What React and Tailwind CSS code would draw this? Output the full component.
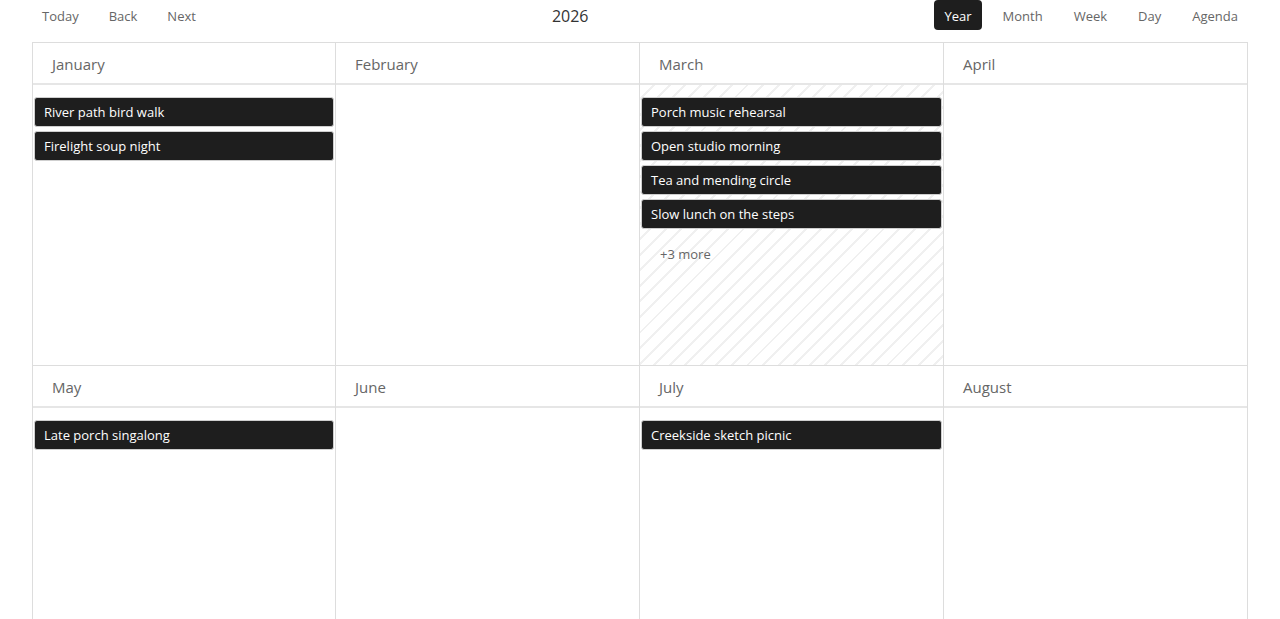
import React from 'react';

const months = [
  { name: 'January', events: ['River path bird walk', 'Firelight soup night'] },
  { name: 'February', events: [] },
  { name: 'March', events: ['Porch music rehearsal', 'Open studio morning', 'Tea and mending circle', 'Slow lunch on the steps'], more: 3, today: true },
  { name: 'April', events: [] },
  { name: 'May', events: ['Late porch singalong'] },
  { name: 'June', events: [] },
  { name: 'July', events: ['Creekside sketch picnic'] },
  { name: 'August', events: [] },
  { name: 'September', events: [] },
  { name: 'October', events: [] },
  { name: 'November', events: [] },
  { name: 'December', events: [] },
];

const views = ['Year', 'Month', 'Week', 'Day', 'Agenda'];

function MonthCell({ month }) {
  return (
    <div className="flex flex-col h-[323px] border-t border-r border-[#dddddd]">
      {/* Month header */}
      <div className="h-[42px] shrink-0 flex items-center px-[19px] pt-[2px] text-[15px] text-[#666666] border-b-2 border-[#e6e6e6]">
        {month.name}
      </div>
      <div
        className={`flex-1 flex flex-col gap-[4px] pt-[12px] ${month.today ? 'bg-[repeating-linear-gradient(135deg,transparent_0px,transparent_9px,#f0f0f0_9px,#f0f0f0_11px)]' : ''}`}
      >
        {month.events.map((ev) => (
          <div
            key={ev}
            className="mx-px h-[30px] flex items-center px-[9px] pt-[2px] bg-[#1e1e1e] text-white text-[13px] rounded-[3px] border border-[#cfcfcf] truncate"
          >
            {ev}
          </div>
        ))}
        {month.more && (
          <div className="pl-[20px] pt-[12px] text-[13px] text-[#666666]">+{month.more} more</div>
        )}
      </div>
    </div>
  );
}

export default function App() {
  const rows = [months.slice(0, 4), months.slice(4, 8), months.slice(8, 12)];

  return (
    <div className="min-h-screen bg-white px-8 font-['Open_Sans','Noto_Sans',sans-serif]">
      {/* Toolbar */}
      <div className="h-[30px] flex items-center text-[13px] text-[#666666]">
        <div className="flex gap-[10px]">
          {['Today', 'Back', 'Next'].map((b) => (
            <button key={b} className="h-[30px] px-[10px] pt-[3px] rounded-[4px]">{b}</button>
          ))}
        </div>
        <div className="flex-1 text-center text-[16px] text-[#333333] pt-[2px]">2026</div>
        <div className="flex gap-[11px]">
          {views.map((v) => (
            <button
              key={v}
              className={`h-[30px] px-[10px] pt-[3px] rounded-[4px] ${v === 'Year' ? 'bg-[#1e1e1e] text-white' : ''}`}
            >
              {v}
            </button>
          ))}
        </div>
      </div>

      {/* Year grid */}
      <div className="mt-[12px] border-l border-b border-[#dddddd]">
        {rows.map((row, r) => (
          <div key={r} className="grid grid-cols-[303px_304px_304px_304px]">
            {row.map((m) => (
              <MonthCell key={m.name} month={m} />
            ))}
          </div>
        ))}
      </div>
    </div>
  );
}
